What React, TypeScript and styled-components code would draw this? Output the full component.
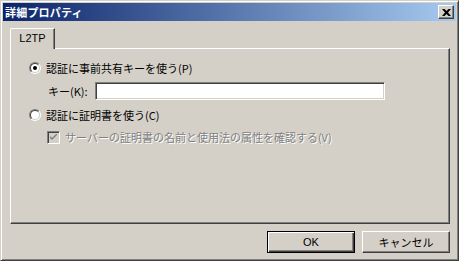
import React from 'react';
import styled, { createGlobalStyle } from 'styled-components';

const GlobalStyle = createGlobalStyle`
  html, body {
    margin: 0;
    padding: 0;
    background: #d4d0c8;
  }
  body {
    font-family: "Noto Sans CJK JP", "Noto Sans", sans-serif;
    font-size: 11px;
    color: #000;
  }
`;

const Window = styled.div`
  box-sizing: border-box;
  width: 459px;
  height: 261px;
  display: flex;
  flex-direction: column;
  background: #d4d0c8;
  border: 1px solid;
  border-color: #d4d0c8 #404040 #404040 #d4d0c8;
  box-shadow: inset 1px 1px #fff, inset -1px -1px #808080;
  padding: 2px;
`;

const TitleBar = styled.div`
  height: 18px;
  flex: none;
  display: flex;
  align-items: center;
  justify-content: space-between;
  padding: 0 2px 0 2px;
  background: linear-gradient(to right, #0a246a, #a6caf0);
`;

const TitleText = styled.span`
  color: #fff;
  font-weight: bold;
  font-size: 11px;
  line-height: 18px;
  letter-spacing: 0.2px;
`;

const CloseButton = styled.div`
  box-sizing: border-box;
  width: 16px;
  height: 14px;
  display: flex;
  align-items: center;
  justify-content: center;
  background: #d4d0c8;
  border: 1px solid;
  border-color: #fff #404040 #404040 #fff;
  box-shadow: inset -1px -1px #808080;
`;

const Body = styled.div`
  flex: 1;
  display: flex;
  flex-direction: column;
  padding: 7px 6px 5px 7px;
`;

const TabStrip = styled.div`
  display: flex;
  height: 20px;
  flex: none;
  position: relative;
  z-index: 1;
`;

const Tab = styled.div`
  box-sizing: border-box;
  width: 45px;
  height: 21px;
  display: flex;
  align-items: center;
  justify-content: center;
  background: #d4d0c8;
  border-top: 1px solid #fff;
  border-left: 1px solid #fff;
  border-right: 1px solid #404040;
  border-top-left-radius: 2px;
  box-shadow: inset -1px 0 #808080;
  font-family: "Liberation Sans", Arial, sans-serif;
  font-size: 11px;
  padding-bottom: 2px;
`;

const Panel = styled.div`
  box-sizing: border-box;
  flex: 1;
  display: flex;
  flex-direction: column;
  border: 1px solid;
  border-color: #fff #404040 #404040 #fff;
  box-shadow: inset -1px -1px #808080;
  padding: 12px 0 0 18px;
`;

const Row = styled.div<{ $indent?: number; $top?: number }>`
  display: flex;
  align-items: center;
  margin-left: ${(p) => p.$indent ?? 0}px;
  margin-top: ${(p) => p.$top ?? 0}px;
  height: 14px;
`;

const Label = styled.span<{ $disabled?: boolean }>`
  white-space: nowrap;
  line-height: 14px;
  color: ${(p) => (p.$disabled ? '#808080' : '#000')};
  text-shadow: ${(p) => (p.$disabled ? '1px 1px #fff' : 'none')};
`;

const RadioOuter = styled.span`
  box-sizing: border-box;
  width: 12px;
  height: 12px;
  border-radius: 50%;
  border: 1px solid;
  border-color: #808080 #fff #fff #808080;
  margin-right: 5px;
  flex: none;
  display: flex;
`;

const RadioInner = styled.span`
  box-sizing: border-box;
  flex: 1;
  border-radius: 50%;
  border: 1px solid;
  border-color: #404040 #d4d0c8 #d4d0c8 #404040;
  background: #fff;
  display: flex;
  align-items: center;
  justify-content: center;
`;

const Dot = styled.span`
  width: 4px;
  height: 4px;
  border-radius: 50%;
  background: #000;
`;

const CheckBox = styled.span`
  box-sizing: border-box;
  width: 13px;
  height: 13px;
  flex: none;
  border: 1px solid;
  border-color: #808080 #fff #fff #808080;
  box-shadow: inset 1px 1px #404040, inset -1px -1px #d4d0c8;
  background: #d4d0c8;
  margin-right: 5px;
  display: flex;
  align-items: center;
  justify-content: center;
`;

const TextInput = styled.div`
  box-sizing: border-box;
  width: 290px;
  height: 18px;
  margin-left: 7px;
  background: #fff;
  border: 1px solid;
  border-color: #808080 #fff #fff #808080;
  box-shadow: inset 1px 1px #404040, inset -1px -1px #d4d0c8;
`;

const ButtonRow = styled.div`
  display: flex;
  justify-content: flex-end;
  gap: 7px;
  margin-top: 7px;
  flex: none;
`;

const Button = styled.div<{ $default?: boolean }>`
  box-sizing: border-box;
  width: 88px;
  height: 22px;
  display: flex;
  align-items: center;
  justify-content: center;
  background: #d4d0c8;
  border: 1px solid;
  border-color: ${(p) => (p.$default ? '#000' : '#fff #404040 #404040 #fff')};
  box-shadow: ${(p) =>
    p.$default
      ? 'inset 1px 1px #fff, inset -1px -1px #404040, inset -2px -2px #808080'
      : 'inset -1px -1px #808080'};
  font-size: 11px;
`;

const ButtonText = styled.span<{ $latin?: boolean }>`
  font-family: ${(p) =>
    p.$latin ? '"Liberation Sans", Arial, sans-serif' : '"Noto Sans CJK JP", sans-serif'};
  font-size: 11px;
`;

export default function App() {
  return (
    <>
      <GlobalStyle />
      <Window>
        <TitleBar>
          <TitleText>詳細プロパティ</TitleText>
          <CloseButton>
            <svg width="9" height="7" viewBox="0 0 9 7">
              <path d="M0 0h2.5l2 2 2-2H9L6 3.5 9 7H6.5l-2-2-2 2H0l3-3.5z" fill="#000" />
            </svg>
          </CloseButton>
        </TitleBar>
        <Body>
          <TabStrip>
            <Tab>L2TP</Tab>
          </TabStrip>
          <Panel>
            <Row>
              <RadioOuter>
                <RadioInner>
                  <Dot />
                </RadioInner>
              </RadioOuter>
              <Label>認証に事前共有キーを使う(P)</Label>
            </Row>
            <Row $indent={19} $top={9}>
              <Label>キー(K):</Label>
              <TextInput />
            </Row>
            <Row $top={10}>
              <RadioOuter>
                <RadioInner />
              </RadioOuter>
              <Label>認証に証明書を使う(C)</Label>
            </Row>
            <Row $indent={18} $top={8}>
              <CheckBox>
                <svg width="7" height="7" viewBox="0 0 7 7">
                  <path d="M0 2l2 2 5-5v2L2 6 0 4z" fill="#808080" />
                </svg>
              </CheckBox>
              <Label $disabled>サーバーの証明書の名前と使用法の属性を確認する(V)</Label>
            </Row>
          </Panel>
          <ButtonRow>
            <Button $default>
              <ButtonText $latin>OK</ButtonText>
            </Button>
            <Button>
              <ButtonText>キャンセル</ButtonText>
            </Button>
          </ButtonRow>
        </Body>
      </Window>
    </>
  );
}
